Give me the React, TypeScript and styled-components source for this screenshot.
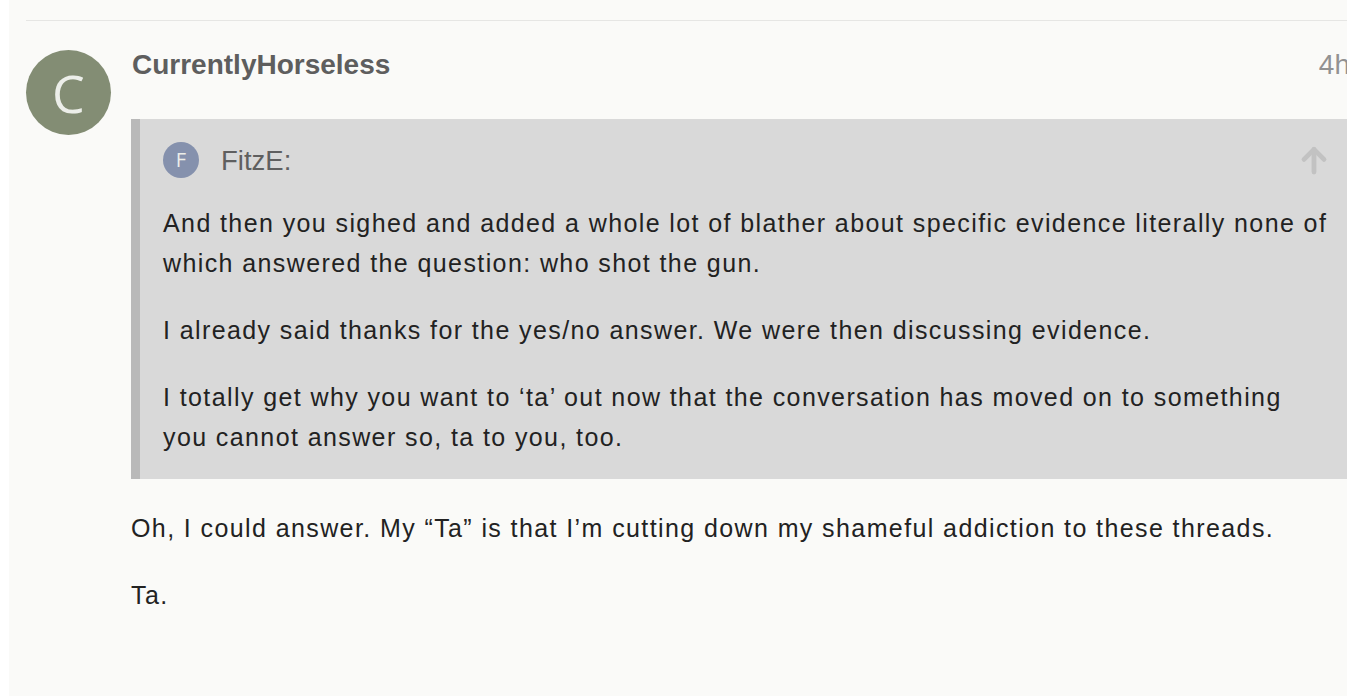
import React from "react";
import styled, { createGlobalStyle } from "styled-components";

const Global = createGlobalStyle`
  html, body { margin: 0; padding: 0; background: #ffffff; overflow: hidden; }
  body { font-family: "Liberation Sans", Arial, sans-serif; }
`;

const Page = styled.div`
  margin-left: 9px;
  width: 1400px;
  height: 696px;
  background: #fafaf8;
  padding: 20px 0 0 17px;
  box-sizing: border-box;
`;

const Post = styled.article`
  border-top: 1px solid #e6e6e4;
  display: flex;
  gap: 21px;
  padding-top: 29px;
`;

const Avatar = styled.div<{ $size: number; $bg: string; $font: number }>`
  flex: none;
  width: ${(p) => p.$size}px;
  height: ${(p) => p.$size}px;
  border-radius: 50%;
  background: ${(p) => p.$bg};
  color: #eceee9;
  display: flex;
  align-items: center;
  justify-content: center;
  font-family: "Open Sans", "Noto Sans", sans-serif;
  font-size: ${(p) => p.$font}px;
  line-height: 1;
`;

const Main = styled.div`
  flex: none;
  width: 1234px;
`;

const Header = styled.div`
  display: flex;
  justify-content: space-between;
  align-items: baseline;
  height: 40px;
  margin-top: -1px;
`;

const Username = styled.span`
  font-weight: 700;
  font-size: 28px;
  color: #5e5e5e;
`;

const Time = styled.span`
  font-size: 28px;
  color: #929292;
  padding-right: 16px;
`;

const Quote = styled.aside`
  margin-top: 30px;
  margin-left: -1px;
  background: #d9d9d9;
  border-left: 9px solid #b9b9b9;
  padding: 23px 36px 22px 23px;
`;

const QuoteTitle = styled.div`
  display: flex;
  align-items: center;
  gap: 22px;
  height: 36px;
  margin-bottom: 25px;
  color: #5f5f5f;
  font-size: 27.5px;
`;

const QuoteName = styled.span`
  flex: 1;
  padding-top: 2px;
`;

const Text = styled.p`
  margin: 0 0 27px;
  font-size: 25px;
  letter-spacing: 1.4px;
  line-height: 40px;
  color: #222222;
  &:last-child { margin-bottom: 0; }
`;

const Cooked = styled.div`
  margin-top: 29px;
  margin-left: -1px;
`;

const ArrowUp = () => (
  <svg width="32" height="32" viewBox="0 0 24 24" fill="none" stroke="#c2c2c2" strokeWidth="3.6" strokeLinecap="round" strokeLinejoin="round">
    <path d="M12 21V4" />
    <path d="M4.5 11.5L12 4l7.5 7.5" />
  </svg>
);

export default function App() {
  return (
    <>
      <Global />
      <Page>
        <Post>
          <Avatar $size={85} $bg="#838d74" $font={52}>C</Avatar>
          <Main>
            <Header>
              <Username>CurrentlyHorseless</Username>
              <Time>4h</Time>
            </Header>
            <Quote>
              <QuoteTitle>
                <Avatar $size={36} $bg="#8591ad" $font={20}>F</Avatar>
                <QuoteName>FitzE:</QuoteName>
                <ArrowUp />
              </QuoteTitle>
              <Text>
                And then you sighed and added a whole lot of blather about specific evidence literally none of which answered the question: who shot the gun.
              </Text>
              <Text>I already said thanks for the yes/no answer. We were then discussing evidence.</Text>
              <Text>
                I totally get why you want to ‘ta’ out now that the conversation has moved on to something you cannot answer so, ta to you, too.
              </Text>
            </Quote>
            <Cooked>
              <Text>Oh, I could answer. My “Ta” is that I’m cutting down my shameful addiction to these threads.</Text>
              <Text>Ta.</Text>
            </Cooked>
          </Main>
        </Post>
      </Page>
    </>
  );
}
